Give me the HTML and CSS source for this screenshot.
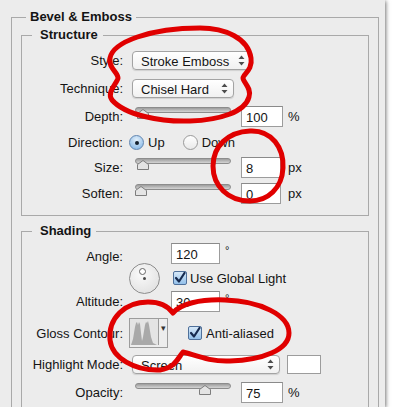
FILE: index.html
```html
<!DOCTYPE html>
<html lang="en">
<head>
    <meta charset="UTF-8">
    <title>Bevel &amp; Emboss</title>
    <link rel="stylesheet" href="styles.css">
</head>
<body>
    <div class="panel">
        <fieldset class="group outer">
            <legend>Bevel &amp; Emboss</legend>

            <fieldset class="group structure">
                <legend class="sub">Structure</legend>
                <div class="row h28">
                    <label class="lbl">Style:</label>
                    <div class="popup w-style">Stroke Emboss
                        <svg class="arrows" width="7" height="11" viewBox="0 0 7 11"><path d="M3.5 0.5 L6.5 4 L0.5 4 Z M0.5 7 L6.5 7 L3.5 10.5 Z"/></svg>
                    </div>
                </div>
                <div class="row h28">
                    <label class="lbl">Technique:</label>
                    <div class="popup w-tech">Chisel Hard
                        <svg class="arrows" width="7" height="11" viewBox="0 0 7 11"><path d="M3.5 0.5 L6.5 4 L0.5 4 Z M0.5 7 L6.5 7 L3.5 10.5 Z"/></svg>
                    </div>
                </div>
                <div class="row h28">
                    <label class="lbl">Depth:</label>
                    <div class="slider"><div class="track"></div><svg class="thumb" style="left: 2px" width="12" height="10" viewBox="0 0 12 10"><path d="M0.5 9.5 L0.5 4.5 L6 0.5 L11.5 4.5 L11.5 9.5 Z"/></svg></div>
                    <div class="field">100</div>
                    <span class="unit">%</span>
                </div>
                <div class="row h24">
                    <label class="lbl">Direction:</label>
                    <span class="radio on"></span><span class="opt">Up</span>
                    <span class="radio second"></span><span class="opt">Down</span>
                </div>
                <div class="row h26">
                    <label class="lbl">Size:</label>
                    <div class="slider"><div class="track"></div><svg class="thumb" style="left: 2px" width="12" height="10" viewBox="0 0 12 10"><path d="M0.5 9.5 L0.5 4.5 L6 0.5 L11.5 4.5 L11.5 9.5 Z"/></svg></div>
                    <div class="field w-px">8</div>
                    <span class="unit px">px</span>
                </div>
                <div class="row h26">
                    <label class="lbl">Soften:</label>
                    <div class="slider"><div class="track"></div><svg class="thumb" style="left: 0px" width="12" height="10" viewBox="0 0 12 10"><path d="M0.5 9.5 L0.5 4.5 L6 0.5 L11.5 4.5 L11.5 9.5 Z"/></svg></div>
                    <div class="field w-px">0</div>
                    <span class="unit px">px</span>
                </div>
            </fieldset>

            <fieldset class="group shading">
                <legend class="sub">Shading</legend>
                <div class="angles">
                    <label class="lbl a-lbl">Angle:</label>
                    <div class="dial"><span class="handle"></span><span class="center"></span></div>
                    <div class="a-val"><div class="field w-deg">120</div><span class="deg">°</span></div>
                    <div class="a-check"><span class="check"><svg width="12" height="12" viewBox="0 0 12 12"><path d="M2 6 L5 9.5 L10.5 1"/></svg></span><span class="opt">Use Global Light</span></div>
                    <label class="lbl t-lbl">Altitude:</label>
                    <div class="t-val"><div class="field w-deg">30</div><span class="deg">°</span></div>
                </div>
                <div class="row h34">
                    <label class="lbl">Gloss Contour:</label>
                    <div class="contour">
                        <svg class="curve" width="28" height="26" viewBox="0 0 28 26"><path d="M1 26 L3 20 L5 8 L6 4 L7 3 L8 6 L9 3 L10 5 L11 14 L12 22 L13 18 L15 6 L16 3 L17 4 L18 2 L19 6 L21 18 L23 24 L27 26 Z"/></svg>
                        <span class="drop">▾</span>
                    </div>
                    <span class="check anti"><svg width="12" height="12" viewBox="0 0 12 12"><path d="M2 6 L5 9.5 L10.5 1"/></svg></span><span class="opt">Anti-aliased</span>
                </div>
                <div class="row h28">
                    <label class="lbl">Highlight Mode:</label>
                    <div class="popup w-mode">Screen
                        <svg class="arrows" width="7" height="11" viewBox="0 0 7 11"><path d="M3.5 0.5 L6.5 4 L0.5 4 Z M0.5 7 L6.5 7 L3.5 10.5 Z"/></svg>
                    </div>
                    <div class="swatch"></div>
                </div>
                <div class="row h28">
                    <label class="lbl">Opacity:</label>
                    <div class="slider"><div class="track"></div><svg class="thumb" style="left: 64px" width="12" height="10" viewBox="0 0 12 10"><path d="M0.5 9.5 L0.5 4.5 L6 0.5 L11.5 4.5 L11.5 9.5 Z"/></svg></div>
                    <div class="field">75</div>
                    <span class="unit">%</span>
                </div>
            </fieldset>
        </fieldset>

        <!-- red marks drawn over the dialog -->
        <svg class="marks" width="395" height="415" viewBox="0 0 395 415">
            <path d="M200 28 C225 28, 248 38, 251 58 C253 70, 243 74, 243 78 C243 82, 252 88, 249 97 C245 112, 220 120, 190 121 C160 122, 125 115, 112 100 C106 92, 118 82, 118 78 C118 72, 108 68, 110 58 C113 42, 150 28, 200 28 Z"/>
            <path d="M250 131 C272 130, 284 148, 283 168 C282 188, 268 201, 250 201 C228 201, 213 186, 213 166 C213 146, 228 132, 250 131 Z"/>
            <path d="M173 313 C180 304, 200 299, 225 300 C260 301, 289 315, 289 333 C289 350, 262 360, 230 361 C210 362, 195 355, 183 352 C178 358, 175 368, 160 370 C135 371, 112 358, 110 340 C108 318, 125 302, 148 302 C160 302, 168 306, 173 313 Z"/>
        </svg>
    </div>
</body>
</html>
```

FILE: styles.css
```css
body {
    margin: 0;
    background: #fff;
    font-family: "Liberation Sans", Arial, sans-serif;
    font-size: 13px;
    color: #141414;
}

.panel {
    position: relative;
    width: 385px;
    height: 407px;
    padding-top: 9px;
    box-sizing: border-box;
    background: #ececec;
    box-shadow: 1px 1px 4px rgba(0, 0, 0, 0.55);
    overflow: hidden;
}

.group {
    margin: 0;
    border: 1px solid #a9a9a9;
    min-width: 0;
}
.group legend {
    font-weight: bold;
    line-height: 16px;
    padding: 0 4px;
    margin-left: 5px;
}
.group legend.sub {
    padding: 0 5px 0 8px;
    margin-left: 0;
}

.outer {
    width: 368px;
    box-sizing: border-box;
    margin-left: 11px;
    padding: 2px 9px 20px;
}
.structure {
    padding: 3px 10px 9px;
}
.shading {
    margin-top: 7px;
    padding: 4px 10px 10px;
}

.row {
    display: flex;
    align-items: center;
}
.h24 { height: 24px; }
.h26 { height: 26px; }
.h28 { height: 28px; }
.h34 { height: 34px; margin-top: 4px; }

.lbl {
    width: 91px;
    flex: none;
    text-align: right;
}

/* popup buttons */
.popup {
    position: relative;
    height: 19px;
    line-height: 19px;
    box-sizing: border-box;
    margin-left: 9px;
    padding-left: 8px;
    border: 1px solid #a3a3a3;
    border-radius: 4px;
    background: linear-gradient(#ffffff, #f1f1f1);
    box-shadow: 0 1px 1px rgba(0, 0, 0, 0.12);
}
.popup .arrows {
    position: absolute;
    right: 5px;
    top: 3px;
    fill: #4d4d4d;
}
.w-style { width: 119px; }
.w-tech { width: 102px; }
.w-mode { width: 148px; }

/* sliders */
.slider {
    position: relative;
    width: 96px;
    height: 12px;
    margin-left: 12px;
    margin-bottom: 7px;
}
.track {
    height: 4px;
    border: 1px solid #8c8c8c;
    border-radius: 3px;
    background: linear-gradient(#9d9d9d, #d4d4d4);
}
.thumb {
    position: absolute;
    top: 2px;
    fill: #e4e4e4;
    stroke: #7d7d7d;
    stroke-width: 1;
}

/* text fields */
.field {
    width: 42px;
    height: 21px;
    line-height: 21px;
    box-sizing: border-box;
    margin-left: 10px;
    padding-left: 4px;
    background: #fff;
    border: 1px solid #9c9c9c;
    border-top-color: #8a8a8a;
}
.w-px { width: 40px; }
.w-deg { width: 49px; margin-left: 0; }
.unit {
    margin-left: 5px;
}
.unit.px {
    margin-left: 7px;
}
.deg {
    margin-left: 5px;
    font-size: 11px;
    align-self: flex-start;
    line-height: 14px;
}

/* radios */
.radio {
    width: 15px;
    height: 15px;
    box-sizing: border-box;
    margin-left: 6px;
    border-radius: 50%;
    border: 1px solid #9a9a9a;
    background: linear-gradient(#ffffff, #e9e9e9);
    position: relative;
}
.radio.on {
    border-color: #6286b0;
    background: radial-gradient(circle at 50% 30%, #e2effa, #8fbde8 80%);
}
.radio.on::after {
    content: '';
    position: absolute;
    left: 5px;
    top: 5px;
    width: 4px;
    height: 4px;
    border-radius: 50%;
    background: #14202e;
}
.radio.second {
    margin-left: 18px;
}
.opt {
    margin-left: 4px;
}

/* checkboxes */
.check {
    width: 14px;
    height: 14px;
    box-sizing: border-box;
    display: inline-flex;
    align-items: center;
    justify-content: center;
    border: 1px solid #4f709a;
    border-radius: 2px;
    background: linear-gradient(#d6e8f8, #93c0ea);
}
.check svg {
    fill: none;
    stroke: #162a4f;
    stroke-width: 2.2;
    stroke-linecap: round;
    stroke-linejoin: round;
}
.check.anti {
    margin-left: 20px;
}

/* angle block */
.angles {
    display: grid;
    grid-template-columns: 91px 48px auto;
    grid-template-rows: 22px 26px 21px;
    align-items: center;
}
.a-lbl { grid-row: 1; grid-column: 1; margin-top: 5px; }
.t-lbl { grid-row: 3; grid-column: 1; }
.a-val { grid-row: 1; grid-column: 3; display: flex; height: 22px; }
.t-val { grid-row: 3; grid-column: 3; display: flex; height: 21px; }
.a-check { grid-row: 2; grid-column: 3; display: flex; align-items: center; margin-left: 2px; }
.a-check .opt { margin-left: 3px; }

.dial {
    grid-row: 2;
    grid-column: 2;
    justify-self: start;
    position: relative;
    width: 31px;
    height: 31px;
    box-sizing: border-box;
    margin-left: 6px;
    border-radius: 50%;
    border: 1px solid #8d8d8d;
    background: radial-gradient(circle at 40% 35%, #fafafa, #dcdcdc);
}
.dial .handle {
    position: absolute;
    left: 9px;
    top: 4px;
    width: 5px;
    height: 5px;
    border-radius: 50%;
    border: 1px solid #666;
    background: #fff;
}
.dial .center {
    position: absolute;
    left: 13px;
    top: 13px;
    width: 3px;
    height: 3px;
    border-radius: 50%;
    background: #4a4a4a;
}

/* gloss contour */
.contour {
    display: flex;
    margin-left: 6px;
    height: 28px;
    border: 1px solid #9c9c9c;
    background: #ededed;
}
.contour .curve {
    fill: #a9a9a9;
    background: #e4e4e4;
    border-right: 1px solid #9c9c9c;
}
.contour .drop {
    width: 8px;
    font-size: 9px;
    line-height: 18px;
    text-align: center;
    color: #333;
}

.swatch {
    width: 34px;
    height: 19px;
    box-sizing: border-box;
    margin-left: 7px;
    background: #fff;
    border: 1px solid #9c9c9c;
}

.marks {
    position: absolute;
    left: 0;
    top: 0;
    pointer-events: none;
    fill: none;
    stroke: #e00000;
    stroke-width: 5;
    stroke-linejoin: round;
}
```
